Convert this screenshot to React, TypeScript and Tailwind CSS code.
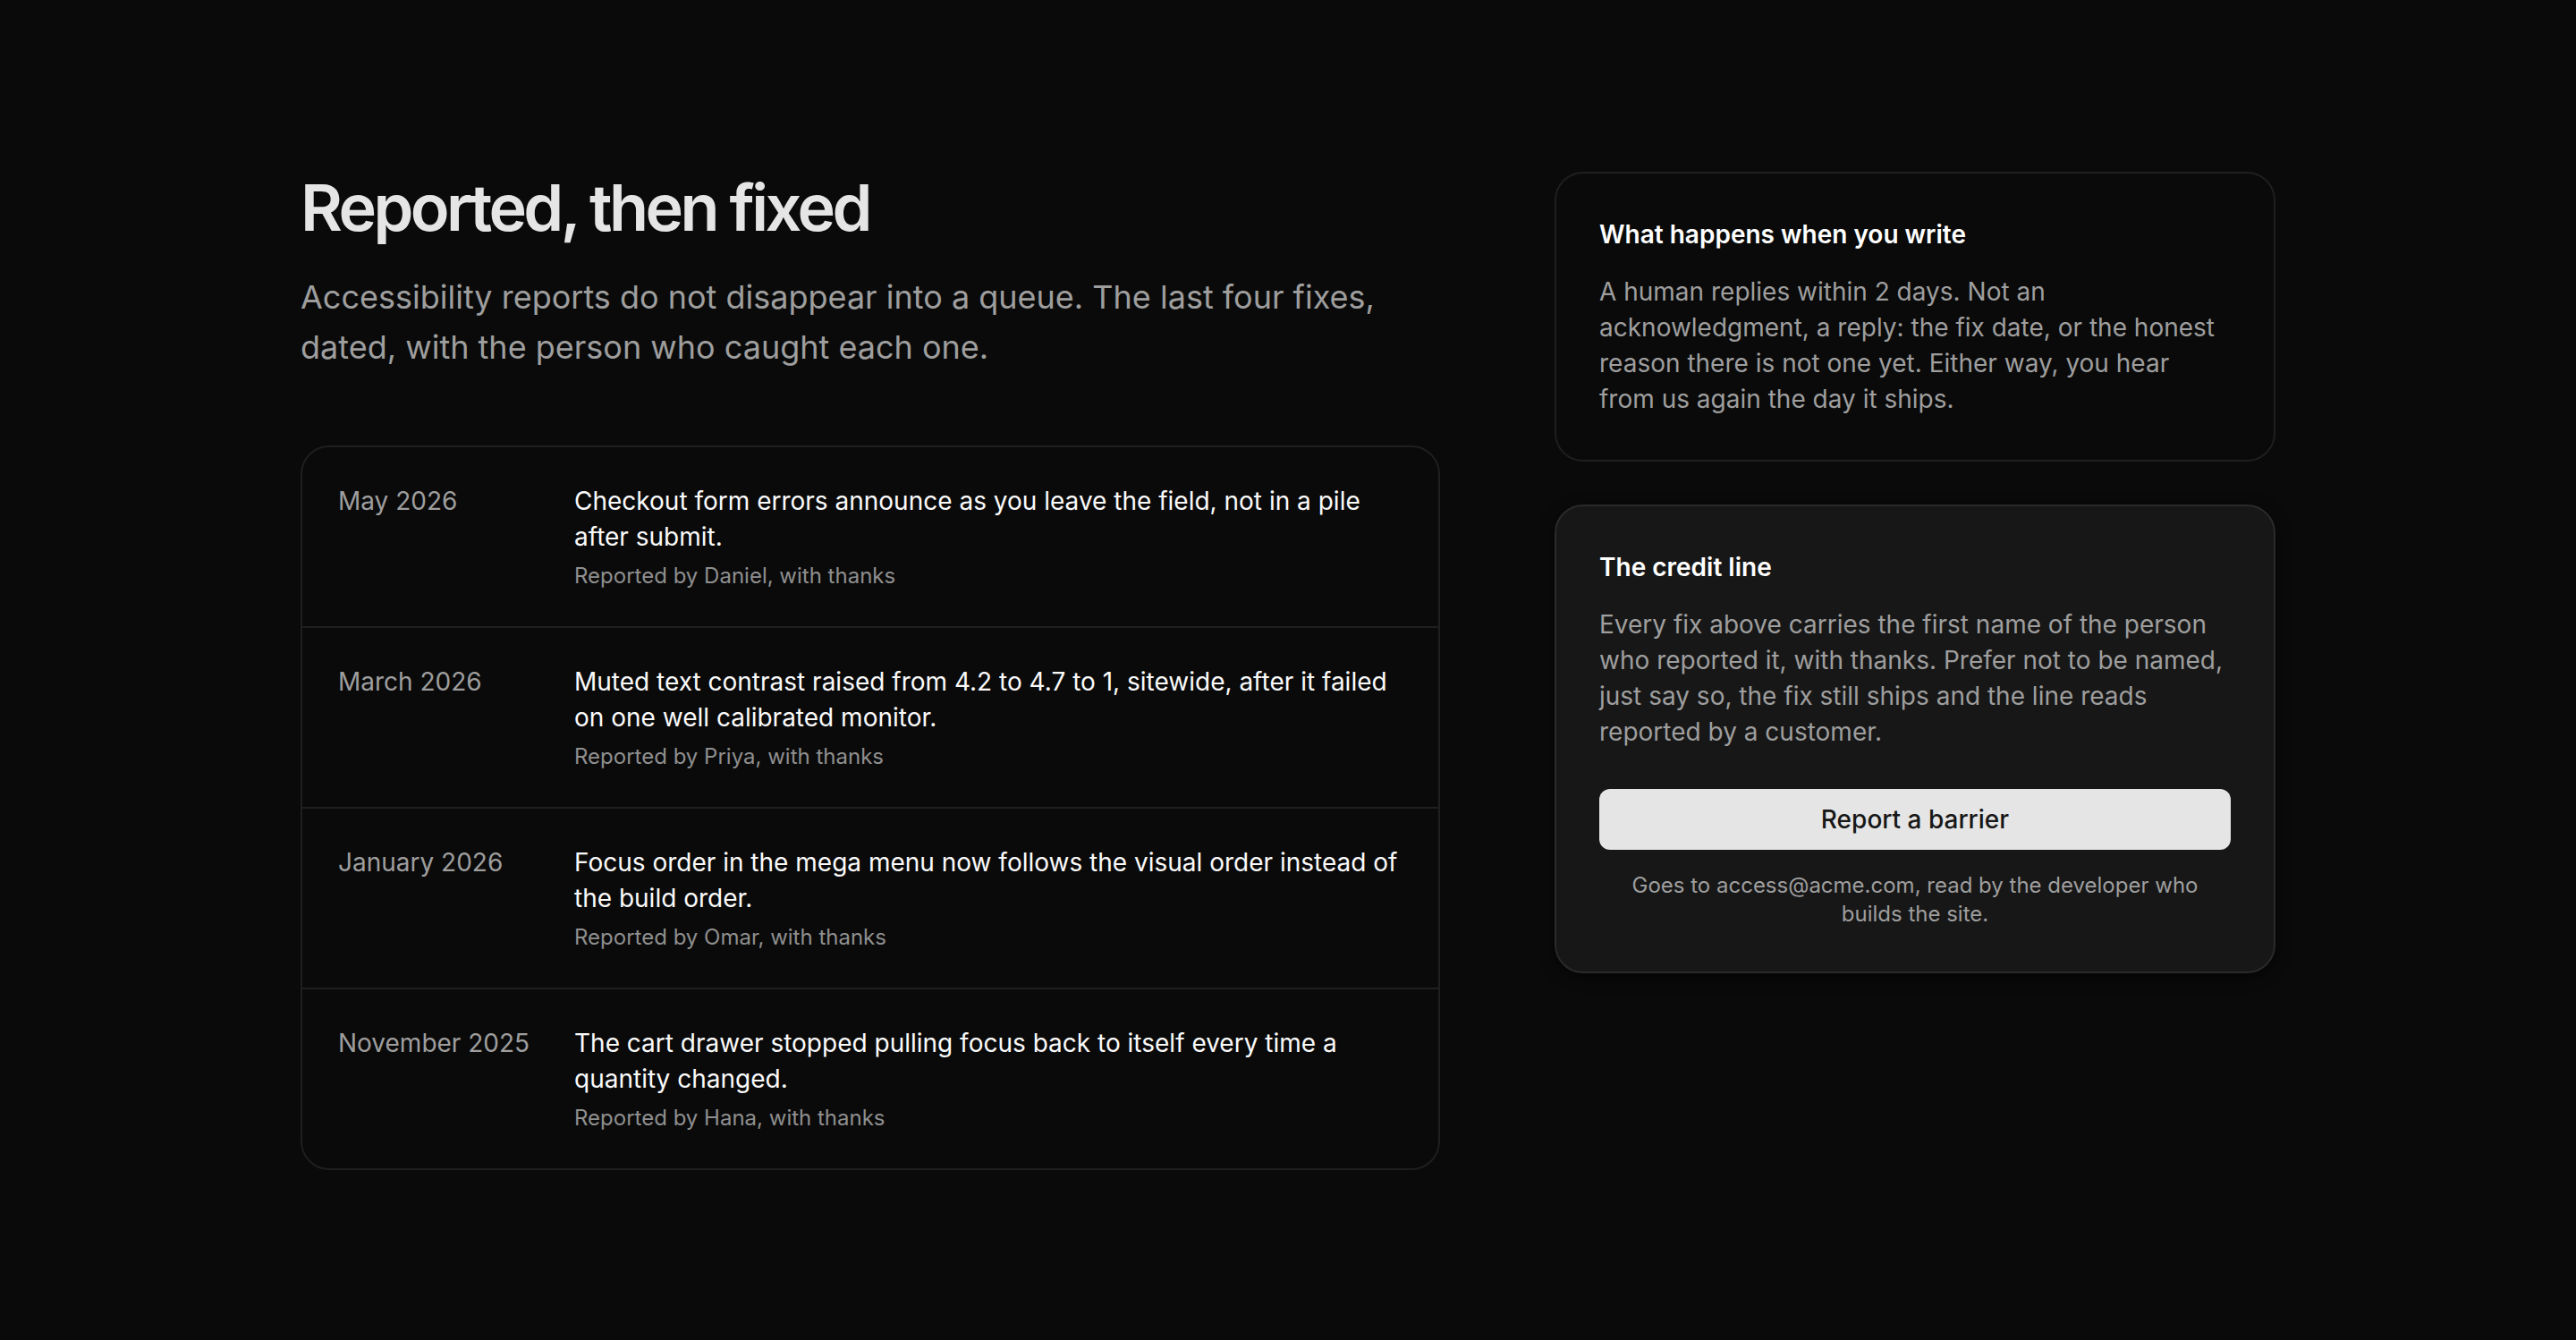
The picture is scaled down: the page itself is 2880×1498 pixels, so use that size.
const FIXES = [
  {
    date: "May 2026",
    text: "Checkout form errors announce as you leave the field, not in a pile after submit.",
    by: "Daniel",
  },
  {
    date: "March 2026",
    text: "Muted text contrast raised from 4.2 to 4.7 to 1, sitewide, after it failed on one well calibrated monitor.",
    by: "Priya",
  },
  {
    date: "January 2026",
    text: "Focus order in the mega menu now follows the visual order instead of the build order.",
    by: "Omar",
  },
  {
    date: "November 2025",
    text: "The cart drawer stopped pulling focus back to itself every time a quantity changed.",
    by: "Hana",
  },
];

export default function App() {
  return (
    <div className="min-h-screen bg-[#0a0a0a] font-['Inter',sans-serif] antialiased">
      <main className="max-w-[2304px] mx-auto px-12 pt-48 pb-48 grid grid-cols-[1274px_1fr] gap-x-[128px] items-start">

        {/* Left: heading + fix log */}
        <section>
          <h1 className="text-[72px] leading-[80px] font-semibold tracking-[-0.05em] text-[#e5e5e5]">
            Reported, then fixed
          </h1>
          <p className="mt-8 text-[36px] leading-[56px] text-[#9e9e9e]">
            Accessibility reports do not disappear into a queue. The last four fixes,
            dated, with the person who caught each one.
          </p>

          <ul className="mt-[82px] border-2 border-[#1f1f1f] rounded-[32px] overflow-hidden">
            {FIXES.map((fix, i) => (
              <li
                key={fix.date}
                className={`grid grid-cols-[224px_1fr] gap-x-10 px-10 py-10 ${i > 0 ? "border-t-2 border-[#1f1f1f]" : ""}`}
              >
                <span className="text-[28px] leading-10 text-[#9e9e9e]">{fix.date}</span>
                <div>
                  <p className="text-[28px] leading-10 text-[#fafafa]">{fix.text}</p>
                  <p className="mt-2 text-[24px] leading-8 text-[#8f8f8f]">
                    Reported by {fix.by}, with thanks
                  </p>
                </div>
              </li>
            ))}
          </ul>
        </section>

        {/* Right: info cards */}
        <aside className="flex flex-col gap-12">
          <div className="border-2 border-[#1f1f1f] rounded-[32px] p-12 bg-[#0a0a0a]">
            <h2 className="text-[28px] leading-10 font-semibold text-white">What happens when you write</h2>
            <p className="mt-6 text-[28px] leading-10 text-[#9e9e9e]">
              A human replies within 2 days. Not an acknowledgment, a reply: the fix date, or the
              honest reason there is not one yet. Either way, you hear from us again the day it ships.
            </p>
          </div>

          <div className="border-2 border-[#2a2a2a] rounded-[32px] p-12 bg-[#171717] shadow-[0_4px_16px_rgba(0,0,0,0.6)]">
            <h2 className="text-[28px] leading-10 font-semibold text-white">The credit line</h2>
            <p className="mt-6 text-[28px] leading-10 text-[#9e9e9e]">
              Every fix above carries the first name of the person who reported it, with thanks.
              Prefer not to be named, just say so, the fix still ships and the line reads reported by
              a customer.
            </p>
            <button className="mt-11 w-full rounded-xl bg-[#e5e5e5] py-[14px] text-[28px] leading-10 font-medium text-[#171717]">
              Report a barrier
            </button>
            <p className="mt-6 text-center text-[24px] leading-8 text-[#9e9e9e]">
              Goes to access@acme.com, read by the developer who builds the site.
            </p>
          </div>
        </aside>
      </main>
    </div>
  );
}
